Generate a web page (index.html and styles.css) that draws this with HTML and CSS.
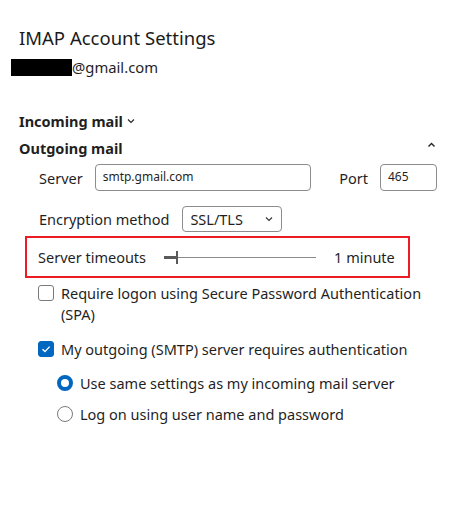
FILE: index.html
```html
<!DOCTYPE html>
<html>
<head>
<meta charset="utf-8">
<link rel="stylesheet" href="styles.css">
</head>
<body>
<div class="page">
  <h1 class="title">IMAP Account Settings</h1>
  <div class="email"><span class="redact"></span>@gmail.com</div>

  <div class="section-head incoming">
    <span>Incoming mail</span>
    <svg class="chev-down" width="8" height="6" viewBox="0 0 8 6"><path d="M1 1.5 L4 4.5 L7 1.5" fill="none" stroke="#222" stroke-width="1.1"/></svg>
  </div>
  <div class="section-head outgoing">
    <span>Outgoing mail</span>
    <svg class="chev-up" width="9" height="6" viewBox="0 0 9 6"><path d="M1.5 4.5 L4.5 1.5 L7.5 4.5" fill="none" stroke="#222" stroke-width="1.4"/></svg>
  </div>

  <div class="section-body">
    <div class="row server-row">
      <span class="label">Server</span>
      <div class="input server-input">smtp.gmail.com</div>
      <span class="label port-label">Port</span>
      <div class="input port-input">465</div>
    </div>

    <div class="row enc-row">
      <span class="label">Encryption method</span>
      <div class="select">
        <span>SSL/TLS</span>
        <svg width="8" height="6" viewBox="0 0 8 6"><path d="M1 1.5 L4 4.5 L7 1.5" fill="none" stroke="#333" stroke-width="1.1"/></svg>
      </div>
    </div>

    <div class="timeout-box">
      <span class="label">Server timeouts</span>
      <div class="slider">
        <div class="track-fill"></div>
        <div class="thumb"></div>
        <div class="track-rest"></div>
      </div>
      <span class="label timeout-val">1 minute</span>
    </div>

    <div class="check-row spa">
      <span class="checkbox"></span>
      <span class="check-text">Require logon using Secure Password Authentication (SPA)</span>
    </div>

    <div class="check-row auth">
      <span class="checkbox checked">
        <svg width="12" height="12" viewBox="0 0 12 12"><path d="M2.5 6.2 L5 8.6 L9.6 3.6" fill="none" stroke="#fff" stroke-width="1.4"/></svg>
      </span>
      <span class="check-text">My outgoing (SMTP) server requires authentication</span>
    </div>

    <div class="radio-row first">
      <span class="radio on"></span>
      <span class="check-text">Use same settings as my incoming mail server</span>
    </div>
    <div class="radio-row">
      <span class="radio"></span>
      <span class="check-text">Log on using user name and password</span>
    </div>
  </div>
</div>
</body>
</html>
```

FILE: styles.css
```css
html, body {
  margin: 0;
  padding: 0;
  background: #ffffff;
}
body {
  font-family: "Noto Sans", "Open Sans", sans-serif;
  color: #1f1f1f;
  width: 472px;
  height: 512px;
  overflow: hidden;
}
.page {
  padding: 24px 35px 0 19px;
}
.title {
  margin: 0;
  font-size: 18.5px;
  font-weight: 400;
  line-height: 27px;
  color: #1b1b1b;
}
.email {
  display: flex;
  align-items: center;
  margin-top: 7px;
  margin-left: -8px;
  font-size: 14.8px;
  line-height: 18px;
}
.redact {
  display: inline-block;
  width: 61px;
  height: 17px;
  background: #000;
}
.section-head {
  display: flex;
  align-items: center;
  font-size: 14.5px;
  font-weight: 700;
  line-height: 20px;
}
.section-head.incoming {
  margin-top: 35px;
  gap: 4px;
}
.section-head.outgoing {
  margin-top: 7px;
  justify-content: space-between;
}
.chev-up {
  margin-right: 1px;
  margin-top: -6px;
}
.section-body {
  padding-left: 20px;
}
.row {
  display: flex;
  align-items: center;
}
.label {
  font-size: 14.5px;
  line-height: 20px;
}
.server-row {
  margin-top: 6px;
  height: 27px;
}
.input {
  box-sizing: border-box;
  height: 27px;
  border: 1px solid #8c8c8c;
  border-radius: 4px;
  font-size: 12px;
  line-height: 18px;
  padding: 3px 7px;
  color: #1f1f1f;
}
.server-input {
  width: 221px;
  margin-left: 12px;
}
.port-label {
  margin-left: 28px;
}
.port-input {
  width: 58px;
  margin-left: 12px;
}
.enc-row {
  margin-top: 15px;
  height: 26px;
}
.select {
  box-sizing: border-box;
  width: 100px;
  height: 26px;
  margin-left: 13px;
  border: 1px solid #8c8c8c;
  border-radius: 4px;
  display: flex;
  align-items: center;
  justify-content: space-between;
  padding: 0 8px 0 7px;
  font-size: 14.5px;
}
.timeout-box {
  box-sizing: border-box;
  margin-top: 4px;
  margin-left: -14px;
  width: 385px;
  height: 42px;
  border: 2.5px solid #ec1c24;
  display: flex;
  align-items: center;
  padding-left: 11px;
}
.slider {
  display: flex;
  align-items: center;
  width: 152px;
  height: 14px;
  margin-left: 18px;
}
.track-fill {
  width: 12px;
  height: 3px;
  background: #5a5a5a;
}
.thumb {
  width: 2px;
  height: 13px;
  background: #5a5a5a;
}
.track-rest {
  flex: 1;
  height: 1px;
  background: #8a8a8a;
}
.timeout-val {
  margin-left: 18px;
}
.check-row, .radio-row {
  display: flex;
  align-items: flex-start;
  font-size: 14.5px;
  line-height: 21px;
}
.check-row.spa {
  margin-top: 5px;
}
.check-row.auth {
  margin-top: 14px;
}
.checkbox {
  box-sizing: border-box;
  flex: none;
  width: 16px;
  height: 16px;
  border: 1px solid #7a7a7a;
  border-radius: 3px;
  margin-top: 2px;
  margin-left: -1px;
  margin-right: 7px;
  display: flex;
  align-items: center;
  justify-content: center;
}
.checkbox.checked {
  background: #0067c0;
  border-color: #0067c0;
}
.check-text {
  flex: 1;
}
.radio-row {
  padding-left: 18px;
}
.radio-row.first {
  margin-top: 13px;
}
.radio-row + .radio-row {
  margin-top: 10px;
}
.radio {
  box-sizing: border-box;
  flex: none;
  width: 16px;
  height: 16px;
  border: 1px solid #7a7a7a;
  border-radius: 50%;
  margin-top: 2px;
  margin-right: 7px;
}
.radio.on {
  border: 4.5px solid #0067c0;
  background: #fff;
}
```
